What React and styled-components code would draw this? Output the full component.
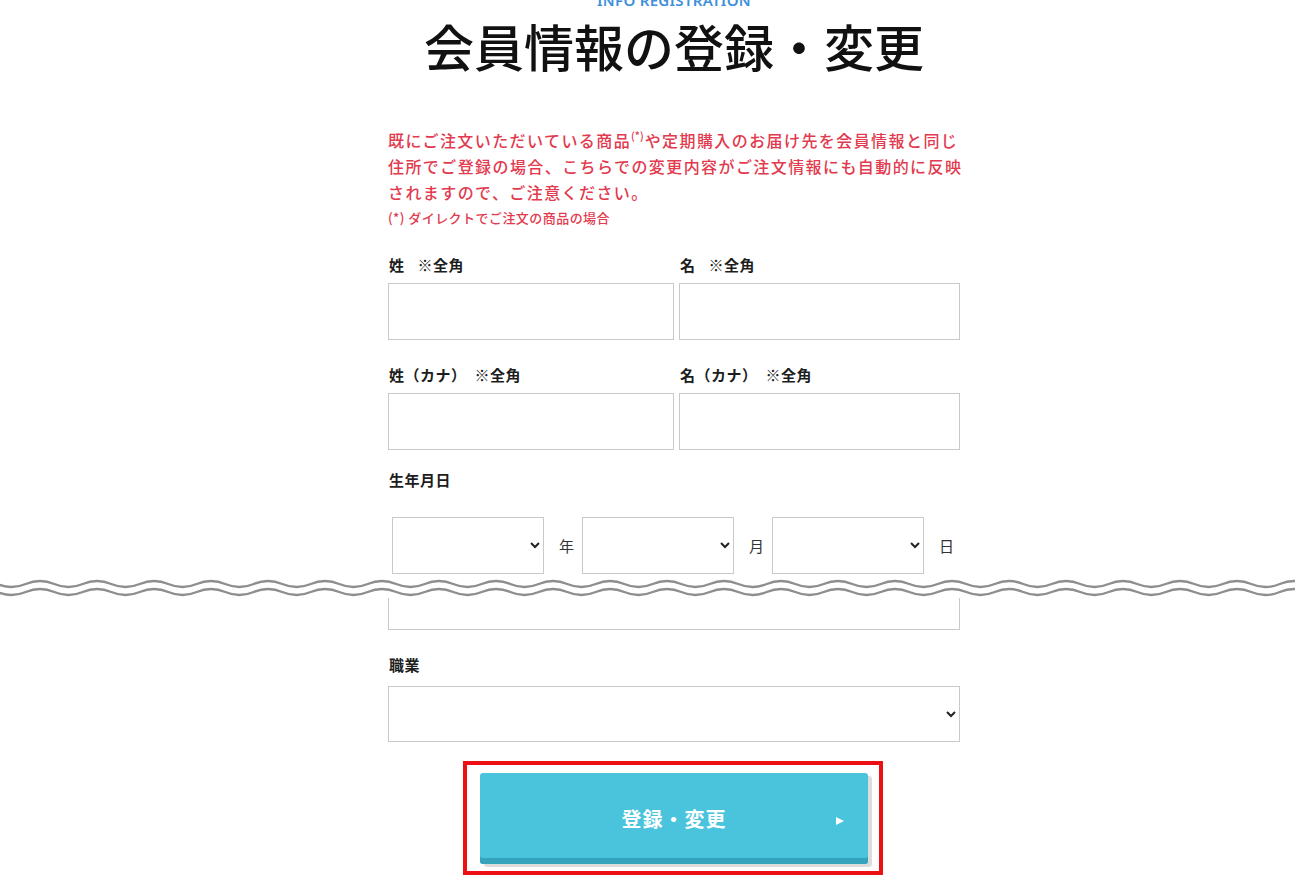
import React from "react";
import styled, { createGlobalStyle } from "styled-components";

const GlobalStyle = createGlobalStyle`
  html, body { margin: 0; padding: 0; background: #fff; }
  body {
    font-family: "Noto Sans CJK JP", "Noto Sans", sans-serif;
    color: #222;
  }
  * { box-sizing: border-box; }
`;

const Page = styled.div`
  width: 1295px;
  height: 880px;
  overflow: hidden;
  background: #fff;
`;

const Column = styled.div`
  width: 572px;
  margin-left: 388px;
`;

const Eyebrow = styled.div`
  margin-top: -7px;
  text-align: center;
  font-family: "Noto Sans", "Open Sans", sans-serif;
  font-size: 15px;
  line-height: 15px;
  font-weight: 600;
  letter-spacing: 0.3px;
  color: #3e8fdc;
`;

const Title = styled.h1`
  margin: 7px 0 0;
  text-align: center;
  font-size: 50px;
  line-height: 60px;
  font-weight: 500;
  color: #111;
  letter-spacing: 0;
`;

const Notice = styled.p`
  width: 582px;
  margin: 52px 0 0;
  font-size: 16px;
  line-height: 26px;
  letter-spacing: 1.42px;
  font-weight: 500;
  color: #e23a4e;
`;

const Sup = styled.sup`
  font-size: 10.5px;
  letter-spacing: 0;
  vertical-align: 7px;
  line-height: 0;
  margin-right: 1px;
`;

const SmallNote = styled.p`
  margin: 3px 0 0;
  font-size: 13px;
  line-height: 20px;
  letter-spacing: 0.45px;
  font-weight: 500;
  color: #e23a4e;
`;

const Grid = styled.div`
  display: grid;
  grid-template-columns: 286px 1fr;
  column-gap: 5px;
  margin-top: ${(p) => p.$top}px;
`;

const Field = styled.div`
  display: flex;
  flex-direction: column;
`;

const Label = styled.label`
  display: flex;
  align-items: center;
  height: 20px;
  margin: ${(p) => p.$top || 0}px 0 9px 1px;
  font-size: 15px;
  font-weight: 700;
  letter-spacing: 0.5px;
  color: #1d1d1d;
`;

const Hint = styled.span`
  margin-left: ${(p) => p.$gap}px;
`;

const TextInput = styled.input`
  display: block;
  width: 100%;
  height: 57px;
  border: 1px solid #c9c9c9;
  border-radius: 0;
  background: #fff;
  padding: 0 10px;
  font-size: 15px;
  outline: none;
`;

const DateRow = styled.div`
  display: flex;
  align-items: center;
  margin: 28px 0 0 4px;
`;

const Select = styled.select`
  display: block;
  flex-shrink: 0;
  width: ${(p) => p.$w};
  height: ${(p) => p.$h || 57}px;
  margin-top: ${(p) => p.$mt || 0}px;
  border: 1px solid #c9c9c9;
  border-radius: 0;
  background: #fff;
  color: #222;
  font-size: 15px;
  padding: 0 8px;
  outline: none;
`;

const Unit = styled.span`
  flex-shrink: 0;
  margin: 0 ${(p) => (p.$last ? 0 : 8)}px 0 15px;
  font-size: 15px;
  color: #333;
  width: 15px;
`;

const WaveBand = styled.div`
  height: 22px;
  margin-top: 2px;
  background: #fff;
  line-height: 0;
`;

const CutInput = styled.div`
  height: 32px;
  border: 1px solid #c9c9c9;
  border-top: none;
`;

const ButtonFrame = styled.div`
  width: 420px;
  margin: 19px 0 0 75px;
  border: 4px solid #ec0f13;
  padding: 8px 11px 7px 13px;
`;

const SubmitButton = styled.button`
  position: relative;
  display: flex;
  align-items: center;
  justify-content: center;
  width: 388px;
  height: 91px;
  border: none;
  border-radius: 3px;
  background: #4ac3dc;
  box-shadow: inset 0 -6px 0 #36a3bd, 4px 3px 0 #dcdcdc;
  color: #fff;
  font-family: "Noto Sans CJK JP", sans-serif;
  font-size: 20px;
  font-weight: 700;
  letter-spacing: 1px;
  padding: 0;
  cursor: pointer;
`;

const Arrow = styled.span`
  position: absolute;
  right: 24px;
  top: 44px;
  width: 0;
  height: 0;
  border-left: 8px solid #fff;
  border-top: 4.5px solid transparent;
  border-bottom: 4.5px solid transparent;
`;

function wavePath(y) {
  const half = 28.5;
  let d = `M -31.25 ${y} q ${half / 2} -6 ${half} 0`;
  for (let x = -31.25 + half; x < 1340; x += half) d += ` t ${half} 0`;
  return d;
}

function Wave() {
  return (
    <WaveBand>
      <svg width="1295" height="22" viewBox="0 0 1295 22">
        <path d={wavePath(8)} fill="none" stroke="#8e8e8e" strokeWidth="2.4" />
        <path d={wavePath(16)} fill="none" stroke="#8e8e8e" strokeWidth="2.4" />
      </svg>
    </WaveBand>
  );
}

export default function App() {
  return (
    <Page>
      <GlobalStyle />
      <Column>
        <Eyebrow>INFO REGISTRATION</Eyebrow>
        <Title>会員情報の登録・変更</Title>
        <Notice>
          既にご注文いただいている商品<Sup>(*)</Sup>や定期購入のお届け先を会員情報と同じ住所でご登録の場合、こちらでの変更内容がご注文情報にも自動的に反映されますので、ご注意ください。
        </Notice>
        <SmallNote>(*) ダイレクトでご注文の商品の場合</SmallNote>

        <Grid $top={26}>
          <Field>
            <Label>姓<Hint $gap={13}>※全角</Hint></Label>
            <TextInput />
          </Field>
          <Field>
            <Label>名<Hint $gap={13}>※全角</Hint></Label>
            <TextInput />
          </Field>
          <Field>
            <Label $top={24}>姓（カナ）<Hint $gap={8}>※全角</Hint></Label>
            <TextInput />
          </Field>
          <Field>
            <Label $top={24}>名（カナ）<Hint $gap={8}>※全角</Hint></Label>
            <TextInput />
          </Field>
        </Grid>

        <Label $top={19}>生年月日</Label>
        <DateRow>
          <Select $w="152px"><option></option></Select>
          <Unit>年</Unit>
          <Select $w="152px"><option></option></Select>
          <Unit>月</Unit>
          <Select $w="152px"><option></option></Select>
          <Unit $last>日</Unit>
        </DateRow>
      </Column>

      <Wave />

      <Column>
        <CutInput />
        <Label $top={24}>職業</Label>
        <Select $w="100%" $mt={12} $h={56}><option></option></Select>
        <ButtonFrame>
          <SubmitButton>
            登録・変更
            <Arrow />
          </SubmitButton>
        </ButtonFrame>
      </Column>
    </Page>
  );
}
